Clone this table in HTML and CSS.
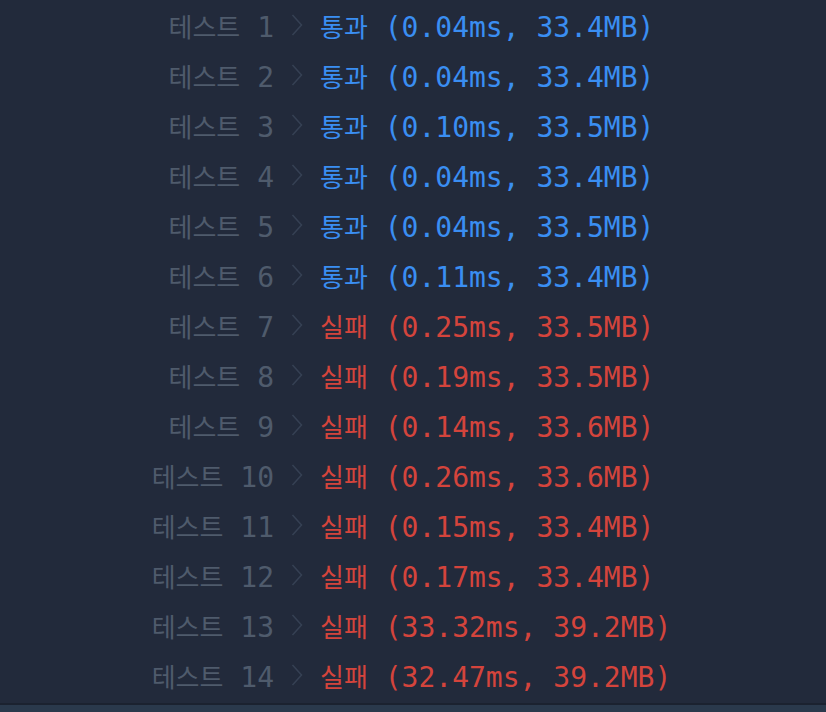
FILE: index.html
```html
<!DOCTYPE html>
<html lang="ko">
<head>
    <meta charset="UTF-8">
    <title>채점 결과</title>
    <link rel="stylesheet" href="styles.css">
</head>
<body>
    <div class="result-list">
        <div class="row pass"><span class="label"><span class="ko">테스트</span> 1</span><span class="arrow"><svg width="12" height="22" viewBox="0 0 12 22"><path d="M1.5 1 L10.5 11 L1.5 21" /></svg></span><span class="res"><span class="ko">통과</span> (0.04ms, 33.4MB)</span></div>
        <div class="row pass"><span class="label"><span class="ko">테스트</span> 2</span><span class="arrow"><svg width="12" height="22" viewBox="0 0 12 22"><path d="M1.5 1 L10.5 11 L1.5 21" /></svg></span><span class="res"><span class="ko">통과</span> (0.04ms, 33.4MB)</span></div>
        <div class="row pass"><span class="label"><span class="ko">테스트</span> 3</span><span class="arrow"><svg width="12" height="22" viewBox="0 0 12 22"><path d="M1.5 1 L10.5 11 L1.5 21" /></svg></span><span class="res"><span class="ko">통과</span> (0.10ms, 33.5MB)</span></div>
        <div class="row pass"><span class="label"><span class="ko">테스트</span> 4</span><span class="arrow"><svg width="12" height="22" viewBox="0 0 12 22"><path d="M1.5 1 L10.5 11 L1.5 21" /></svg></span><span class="res"><span class="ko">통과</span> (0.04ms, 33.4MB)</span></div>
        <div class="row pass"><span class="label"><span class="ko">테스트</span> 5</span><span class="arrow"><svg width="12" height="22" viewBox="0 0 12 22"><path d="M1.5 1 L10.5 11 L1.5 21" /></svg></span><span class="res"><span class="ko">통과</span> (0.04ms, 33.5MB)</span></div>
        <div class="row pass"><span class="label"><span class="ko">테스트</span> 6</span><span class="arrow"><svg width="12" height="22" viewBox="0 0 12 22"><path d="M1.5 1 L10.5 11 L1.5 21" /></svg></span><span class="res"><span class="ko">통과</span> (0.11ms, 33.4MB)</span></div>
        <div class="row fail"><span class="label"><span class="ko">테스트</span> 7</span><span class="arrow"><svg width="12" height="22" viewBox="0 0 12 22"><path d="M1.5 1 L10.5 11 L1.5 21" /></svg></span><span class="res"><span class="ko">실패</span> (0.25ms, 33.5MB)</span></div>
        <div class="row fail"><span class="label"><span class="ko">테스트</span> 8</span><span class="arrow"><svg width="12" height="22" viewBox="0 0 12 22"><path d="M1.5 1 L10.5 11 L1.5 21" /></svg></span><span class="res"><span class="ko">실패</span> (0.19ms, 33.5MB)</span></div>
        <div class="row fail"><span class="label"><span class="ko">테스트</span> 9</span><span class="arrow"><svg width="12" height="22" viewBox="0 0 12 22"><path d="M1.5 1 L10.5 11 L1.5 21" /></svg></span><span class="res"><span class="ko">실패</span> (0.14ms, 33.6MB)</span></div>
        <div class="row fail"><span class="label"><span class="ko">테스트</span> 10</span><span class="arrow"><svg width="12" height="22" viewBox="0 0 12 22"><path d="M1.5 1 L10.5 11 L1.5 21" /></svg></span><span class="res"><span class="ko">실패</span> (0.26ms, 33.6MB)</span></div>
        <div class="row fail"><span class="label"><span class="ko">테스트</span> 11</span><span class="arrow"><svg width="12" height="22" viewBox="0 0 12 22"><path d="M1.5 1 L10.5 11 L1.5 21" /></svg></span><span class="res"><span class="ko">실패</span> (0.15ms, 33.4MB)</span></div>
        <div class="row fail"><span class="label"><span class="ko">테스트</span> 12</span><span class="arrow"><svg width="12" height="22" viewBox="0 0 12 22"><path d="M1.5 1 L10.5 11 L1.5 21" /></svg></span><span class="res"><span class="ko">실패</span> (0.17ms, 33.4MB)</span></div>
        <div class="row fail"><span class="label"><span class="ko">테스트</span> 13</span><span class="arrow"><svg width="12" height="22" viewBox="0 0 12 22"><path d="M1.5 1 L10.5 11 L1.5 21" /></svg></span><span class="res"><span class="ko">실패</span> (33.32ms, 39.2MB)</span></div>
        <div class="row fail"><span class="label"><span class="ko">테스트</span> 14</span><span class="arrow"><svg width="12" height="22" viewBox="0 0 12 22"><path d="M1.5 1 L10.5 11 L1.5 21" /></svg></span><span class="res"><span class="ko">실패</span> (32.47ms, 39.2MB)</span></div>
    </div>
    <div class="footer-bar"></div>
</body>
</html>
```

FILE: styles.css
```css
* {
    box-sizing: border-box;
}

html, body {
    margin: 0;
    padding: 0;
    height: 100%;
    overflow: hidden;
}

body {
    background: #222a3b;
    font-family: 'DejaVu Sans Mono', 'Noto Sans CJK KR', monospace;
    font-size: 28px;
    display: flex;
    flex-direction: column;
}

/* RESULT LIST */
.result-list {
    flex: 1;
}

.row {
    display: flex;
    align-items: center;
    height: 50px;
    white-space: pre;
}

.label {
    width: 274px;
    text-align: right;
    color: #4f5b6c;
}

.ko {
    font-family: 'Noto Sans CJK KR', sans-serif;
    font-size: 26px;
}

.arrow {
    width: 46px;
    display: flex;
    justify-content: center;
}

.arrow path {
    fill: none;
    stroke: #364154;
    stroke-width: 1.5;
}

.pass .res {
    color: #3a8ef2;
}

.fail .res {
    color: #d4443c;
}

/* BOTTOM BAR */
.footer-bar {
    height: 9px;
    background: #2a394c;
    border-top: 2px solid #1b2230;
}
```
